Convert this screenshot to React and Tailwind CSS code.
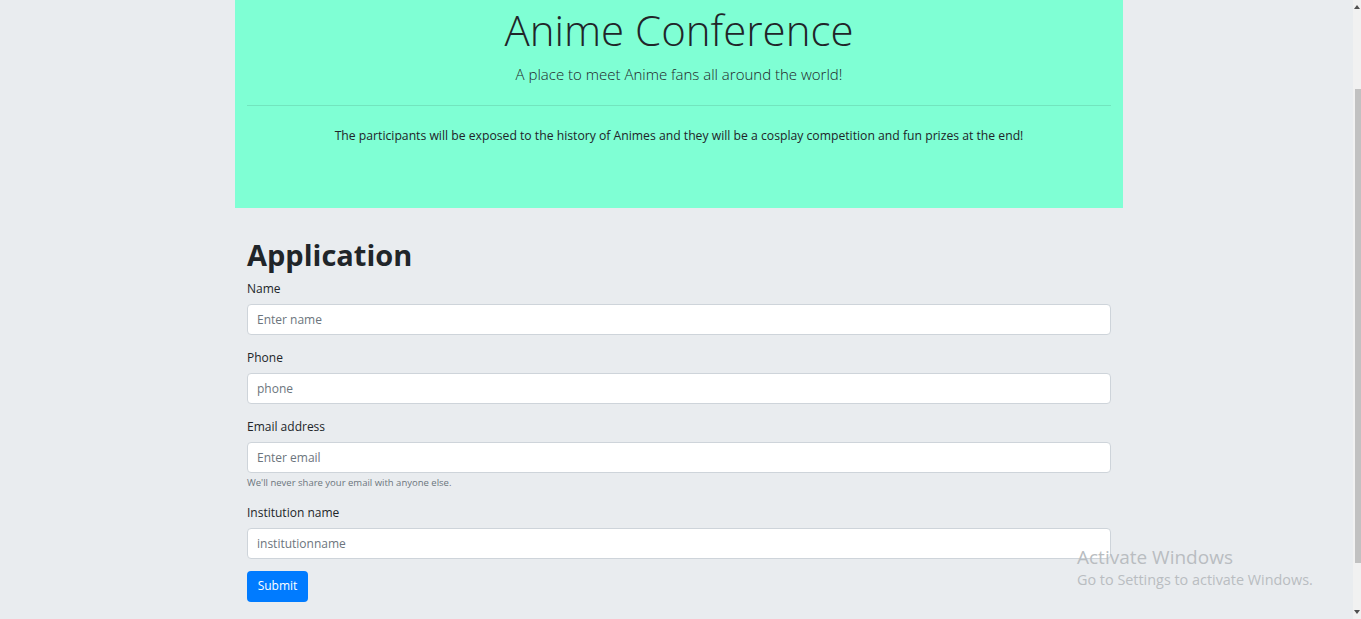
export default function App() {
  const fields = [
    { label: 'Name', placeholder: 'Enter name', type: 'text' },
    { label: 'Phone', placeholder: 'phone', type: 'text' },
    { label: 'Email address', placeholder: 'Enter email', type: 'email', help: "We'll never share your email with anyone else." },
    { label: 'Institution name', placeholder: 'institutionname', type: 'text' },
  ];

  return (
    <div className="relative flex h-[619px] overflow-hidden bg-[#e9ecef] font-['Open_Sans',sans-serif] text-[#212529]">
      <main className="flex-1">
        <div className="ml-[235px] w-[888px]">
          <div className="h-[208px] bg-[#7fffd4] px-3 pt-[5px] text-center">
            <h1 className="text-[42px] font-light leading-[1.2]">Anime Conference</h1>
            <p className="mt-[8px] text-[15px] font-light leading-[22px]">A place to meet Anime fans all around the world!</p>
            <hr className="mt-[20px] border-t border-black/10" />
            <p className="mt-[21px] text-[12.2px] leading-[18px]">
              The participants will be exposed to the history of Animes and they will be a cosplay competition and fun prizes at the end!
            </p>
          </div>

          <form className="px-3 pt-[30px]" onSubmit={(e) => e.preventDefault()}>
            <h2 className="mb-[3px] text-[29px] font-bold leading-[1.2]">Application</h2>
            {fields.map(({ label, placeholder, type, help }) => (
              <div key={label} className="pt-[4px] pb-[10px]">
                <label className="block text-[12px] leading-[18px]">{label}</label>
                <input
                  type={type}
                  placeholder={placeholder}
                  className="mt-[6px] block h-[31px] w-full rounded-[4px] border border-[#ced4da] bg-white px-[9px] text-[12px] placeholder:text-[#6c757d] focus:outline-none"
                />
                {help && <small className="mt-[4px] mb-[1px] block text-[9.5px] leading-[12px] text-[#6c757d]">{help}</small>}
              </div>
            ))}
            <button
              type="submit"
              className="mt-[2px] h-[31px] w-[61px] rounded-[4px] bg-[#007bff] text-[12px] text-white"
            >
              Submit
            </button>
          </form>
        </div>
      </main>

      <div className="flex w-[8px] flex-col bg-[#f1f1f1]">
        <div className="flex h-[14px] items-center justify-center">
          <div className="h-0 w-0 border-x-[3px] border-b-[4px] border-x-transparent border-b-[#505050]" />
        </div>
        <div className="mt-[75px] ml-[2px] h-[474px] bg-[#c1c1c1]" />
        <div className="mt-auto flex h-[14px] items-center justify-center">
          <div className="h-0 w-0 border-x-[3px] border-t-[4px] border-x-transparent border-t-[#505050]" />
        </div>
      </div>

      <div className="pointer-events-none absolute left-[1077px] top-[545px] text-[#b9bdc1]">
        <p className="text-[19px] leading-[25px]">Activate Windows</p>
        <p className="text-[14.4px] leading-[20px]">Go to Settings to activate Windows.</p>
      </div>
    </div>
  );
}
